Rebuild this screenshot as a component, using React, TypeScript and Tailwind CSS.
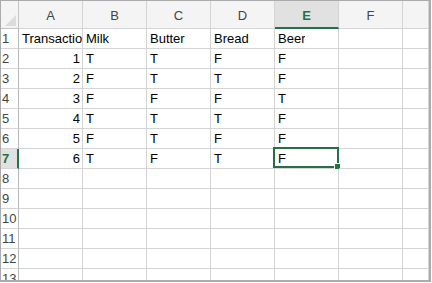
import React from 'react';

const columns = ['A', 'B', 'C', 'D', 'E', 'F', ''];

const rows: (string | number)[][] = [
  ['Transaction', 'Milk', 'Butter', 'Bread', 'Beer'],
  [1, 'T', 'T', 'F', 'F'],
  [2, 'F', 'T', 'T', 'F'],
  [3, 'F', 'F', 'F', 'T'],
  [4, 'T', 'T', 'T', 'F'],
  [5, 'F', 'T', 'F', 'F'],
  [6, 'T', 'F', 'T', 'F'],
  [], [], [], [], [], [],
];

const SEL_ROW = 6; // row 7
const SEL_COL = 4; // column E

export default function App() {
  return (
    <div className="w-[432px] h-[283px] bg-white" style={{ fontFamily: '"Liberation Sans", Arial, sans-serif' }}>
      <div className="w-[431px] h-[282px] overflow-hidden border-t border-l border-r-2 border-b-2 border-[#ababab] text-[13px] text-black">
        <div className="grid grid-cols-[18px_64px_64px_64px_64px_64px_64px_1fr]">
          {/* Corner */}
          <div className="h-[28px] bg-[#f4f4f4] border-r border-b border-[#c4c4c4] flex items-end justify-end pr-[2px] pb-[2px]">
            <svg width="11" height="11" viewBox="0 0 11 11">
              <polygon points="11,0 11,11 0,11" fill="#dcdcdc" />
            </svg>
          </div>
          {/* Column headers */}
          {columns.map((c, i) =>
            i === SEL_COL ? (
              <div
                key={c + i}
                className="h-[28px] bg-[#e1e1e1] border-r border-[#d4d4d4] border-b-2 border-b-[#217346] flex items-end justify-center pb-[2px] font-bold text-[#217346]"
              >
                {c}
              </div>
            ) : (
              <div
                key={c + i}
                className="h-[28px] bg-[#f4f4f4] border-r border-b border-[#d4d4d4] flex items-end justify-center pb-[3px] text-[#444]"
              >
                {c}
              </div>
            )
          )}

          {rows.map((r, ri) => (
            <React.Fragment key={ri}>
              {ri === SEL_ROW ? (
                <div className="h-[20px] bg-[#e1e1e1] border-b border-[#d4d4d4] border-r-2 border-r-[#217346] flex items-end pb-[2px] leading-[15px] pl-[1px] font-bold text-[#217346]">
                  {ri + 1}
                </div>
              ) : (
                <div className="h-[20px] border-r border-b border-r-[#b8b8b8] border-b-[#d4d4d4] flex items-end pb-[2px] leading-[15px] pl-[1px] text-[#444]">
                  {ri + 1}
                </div>
              )}
              {columns.map((_, ci) => {
                const v = r[ci];
                const isNum = typeof v === 'number';
                return (
                  <div
                    key={ci}
                    className={`relative h-[20px] border-r border-b border-[#d4d4d4] flex items-end pb-[2px] leading-[15px] whitespace-nowrap ${
                      isNum ? 'justify-end pr-[2px]' : 'justify-start pl-[3px]'
                    }`}
                  >
                    <span className="min-w-0 overflow-hidden">{v ?? ''}</span>
                    {ri === SEL_ROW && ci === SEL_COL && (
                      <div className="absolute -top-[2px] -left-[2px] -right-[1px] bottom-0 border-2 border-[#217346] pointer-events-none">
                        <div className="absolute -right-[4px] -bottom-[4px] w-[7px] h-[7px] bg-[#217346] border border-white" />
                      </div>
                    )}
                  </div>
                );
              })}
            </React.Fragment>
          ))}
        </div>
      </div>
    </div>
  );
}
